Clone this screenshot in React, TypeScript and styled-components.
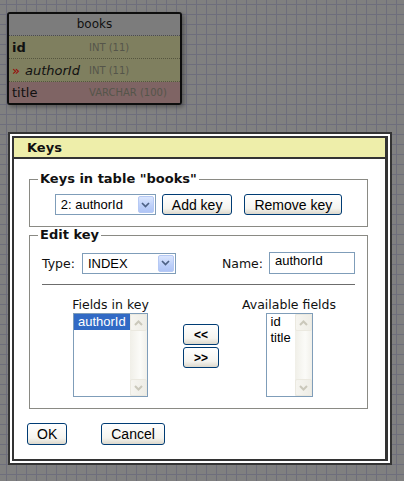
import React from 'react';
import styled, { createGlobalStyle } from 'styled-components';

const GlobalStyle = createGlobalStyle`
  html, body {
    margin: 0;
    padding: 0;
  }
  body {
    font-family: 'DejaVu Sans', Verdana, sans-serif;
  }
`;

const Canvas = styled.div`
  box-sizing: border-box;
  width: 404px;
  height: 481px;
  overflow: hidden;
  padding: 12px 0 0 7px;
  background-color: #808080;
  background-image: linear-gradient(to right, #6e6e7c 1px, transparent 1px),
    linear-gradient(to bottom, #6e6e7c 1px, transparent 1px);
  background-size: 10px 10px;
  background-position: 6px 4px;
`;

/* table node on the designer canvas */
const TableNode = styled.div`
  box-sizing: border-box;
  width: 175px;
  border: 2px solid #0d0d0d;
  border-radius: 3px;
  overflow: hidden;
  box-shadow: 2px 2px 4px rgba(0, 0, 0, 0.35);
`;

const TableTitle = styled.div`
  height: 21px;
  line-height: 21px;
  text-align: center;
  font-size: 12px;
  color: #111;
  background: #7c7c7c;
  border-bottom: 1px dotted #4c4c4c;
`;

const FieldRow = styled.div<{ $tone: 'key' | 'plain' }>`
  display: flex;
  align-items: center;
  height: 22px;
  padding-left: 3px;
  background: ${(p) => (p.$tone === 'key' ? '#7f7f5f' : '#7f6464')};
  &:not(:last-child) {
    border-bottom: 1px dotted #55553f;
  }
  &:last-child {
    height: 21px;
  }
`;

const FieldName = styled.div<{ $bold?: boolean; $italic?: boolean }>`
  width: 77px;
  font-size: 13px;
  color: #111;
  white-space: nowrap;
  font-weight: ${(p) => (p.$bold ? 'bold' : 'normal')};
  font-style: ${(p) => (p.$italic ? 'italic' : 'normal')};
`;

const FkMark = styled.span`
  color: #9a0000;
  font-style: normal;
  margin-right: 5px;
`;

const FieldType = styled.div`
  font-size: 10px;
  color: #55554a;
  white-space: nowrap;
`;

/* dialog */
const Dialog = styled.div`
  box-sizing: border-box;
  width: 384px;
  margin: 27px 0 0 1px;
  border: 2px solid #333;
  padding: 2px;
  background: #fff;
`;

const DialogInner = styled.div`
  border: 2px solid #333;
  border-right-width: 3px;
`;

const DialogTitle = styled.div`
  height: 19px;
  line-height: 19px;
  padding-left: 13px;
  background: #eeeeaa;
  border-bottom: 2px solid #333;
  font-size: 13px;
  font-weight: bold;
  color: #111;
`;

const DialogBody = styled.div`
  padding: 12px 17px 14px 15px;
`;

const Group = styled.fieldset<{ $top?: number }>`
  margin: 0;
  min-width: 0;
  border: 1px solid #8a8a84;
  padding: ${(p) => p.$top ?? 7}px 12px 11px;
`;

const GroupTitle = styled.legend`
  padding: 0 2px;
  margin-left: -4px;
  font-size: 13px;
  line-height: 16px;
  font-weight: bold;
  color: #111;
`;

const KeysRow = styled.div`
  display: flex;
  justify-content: center;
  align-items: center;
  gap: 6px;
`;

const FakeSelect = styled.div<{ $w: number }>`
  box-sizing: border-box;
  width: ${(p) => p.$w}px;
  height: 21px;
  display: flex;
  align-items: center;
  padding-left: 5px;
  border: 1px solid #7f9db9;
  background: #fff;
  font: 13px 'Liberation Sans', Arial, sans-serif;
  color: #000;
`;

const SelectText = styled.span`
  flex: 1;
  white-space: nowrap;
`;

const DropButton = styled.span`
  box-sizing: border-box;
  width: 16px;
  height: 17px;
  margin-right: 1px;
  display: flex;
  align-items: center;
  justify-content: center;
  border: 1px solid #b6c9f4;
  border-radius: 2px;
  background: linear-gradient(#dbe6fe, #bccff9 60%, #b0c5f6);
`;

const Btn = styled.button<{ $h?: number; $w?: number }>`
  box-sizing: border-box;
  height: ${(p) => p.$h ?? 21}px;
  ${(p) => (p.$w ? `width: ${p.$w}px;` : '')}
  padding: 0 9px;
  border: 1px solid #003c74;
  border-radius: 3px;
  background: linear-gradient(#ffffff, #f5f4ef 70%, #dcd8cc);
  font: 14px 'Liberation Sans', Arial, sans-serif;
  color: #000;
  white-space: nowrap;
`;

const Gap = styled.span<{ $w: number }>`
  width: ${(p) => p.$w}px;
`;

const TypeRow = styled.div`
  display: flex;
  align-items: center;
  height: 22px;
`;

const Label = styled.span`
  font-size: 12.5px;
  color: #111;
  white-space: nowrap;
`;

const Spacer = styled.span`
  flex: 1;
`;

const TextInput = styled.div`
  box-sizing: border-box;
  width: 86px;
  height: 22px;
  margin-left: 6px;
  padding-left: 5px;
  line-height: 20px;
  border: 1px solid #7f9db9;
  font: 13px 'Liberation Sans', Arial, sans-serif;
  color: #000;
`;

const Rule = styled.div`
  height: 1px;
  margin-top: 10px;
  background: #6c6c6c;
`;

const Columns = styled.div`
  display: grid;
  grid-template-columns: 137px 44px 1fr;
  margin-top: 12px;
`;

const Column = styled.div`
  display: flex;
  flex-direction: column;
  align-items: center;
`;

const ColumnLabel = styled(Label)`
  line-height: 15px;
  margin-bottom: 1px;
`;

const MoveColumn = styled.div`
  display: flex;
  flex-direction: column;
  align-items: center;
  gap: 2px;
  padding-top: 27px;
`;

const MoveBtn = styled(Btn)`
  width: 36px;
  padding: 0;
  font: bold 12px 'Liberation Sans', Arial, sans-serif;
`;

const ListBox = styled.div<{ $w: number }>`
  box-sizing: border-box;
  width: ${(p) => p.$w}px;
  height: 84px;
  display: flex;
  border: 1px solid #7f9db9;
  background: #fff;
`;

const ListItems = styled.div`
  flex: 1;
  min-width: 0;
`;

const ListItem = styled.div<{ $selected?: boolean }>`
  height: 16px;
  line-height: 16px;
  padding-left: 4px;
  font: 13px 'Liberation Sans', Arial, sans-serif;
  white-space: nowrap;
  color: ${(p) => (p.$selected ? '#fff' : '#000')};
  background: ${(p) => (p.$selected ? '#316ac5' : 'transparent')};
`;

const ScrollBar = styled.div`
  width: 17px;
  display: flex;
  flex-direction: column;
  background: linear-gradient(to right, #f0efe8, #fbfbf8 60%, #f1f0ea);
`;

const ScrollArrow = styled.div`
  box-sizing: border-box;
  width: 17px;
  height: 17px;
  display: flex;
  align-items: center;
  justify-content: center;
  border: 1px solid #ebe9e0;
  border-radius: 2px;
  background: linear-gradient(to right, #f6f5f0, #eeede6);
`;

const ScrollTrack = styled.div`
  flex: 1;
`;

const FooterRow = styled.div`
  display: flex;
  gap: 34px;
  margin: 14px 0 0 -2px;
`;

const Chevron = ({ up, color, w = 1.7 }: { up?: boolean; color: string; w?: number }) => (
  <svg width="9" height="6" viewBox="0 0 9 6">
    <path
      d={up ? 'M1 5 L4.5 1.5 L8 5' : 'M1 1 L4.5 4.5 L8 1'}
      fill="none"
      stroke={color}
      strokeWidth={w}
    />
  </svg>
);

const Select = ({ value, width }: { value: string; width: number }) => (
  <FakeSelect $w={width}>
    <SelectText>{value}</SelectText>
    <DropButton>
      <Chevron color="#4d6185" />
    </DropButton>
  </FakeSelect>
);

const List = ({ items, width, selected }: { items: string[]; width: number; selected?: number }) => (
  <ListBox $w={width}>
    <ListItems>
      {items.map((it, i) => (
        <ListItem key={it} $selected={i === selected}>
          {it}
        </ListItem>
      ))}
    </ListItems>
    <ScrollBar>
      <ScrollArrow>
        <Chevron up color="#cac8bb" w={2} />
      </ScrollArrow>
      <ScrollTrack />
      <ScrollArrow>
        <Chevron color="#cac8bb" w={2} />
      </ScrollArrow>
    </ScrollBar>
  </ListBox>
);

const App = () => {
  return (
    <Canvas>
      <GlobalStyle />
      <TableNode>
        <TableTitle>books</TableTitle>
        <FieldRow $tone="key">
          <FieldName $bold>id</FieldName>
          <FieldType>INT (11)</FieldType>
        </FieldRow>
        <FieldRow $tone="key">
          <FieldName $italic>
            <FkMark>»</FkMark>authorId
          </FieldName>
          <FieldType>INT (11)</FieldType>
        </FieldRow>
        <FieldRow $tone="plain">
          <FieldName>title</FieldName>
          <FieldType>VARCHAR (100)</FieldType>
        </FieldRow>
      </TableNode>

      <Dialog>
        <DialogInner>
          <DialogTitle>Keys</DialogTitle>
          <DialogBody>
            <Group>
              <GroupTitle>Keys in table "books"</GroupTitle>
              <KeysRow>
                <Select value="2: authorId" width={101} />
                <Btn>Add key</Btn>
                <Gap $w={0} />
                <Btn>Remove key</Btn>
              </KeysRow>
            </Group>

            <Group $top={9}>
              <GroupTitle>Edit key</GroupTitle>
              <TypeRow>
                <Label>Type:</Label>
                <Gap $w={7} />
                <Select value="INDEX" width={94} />
                <Spacer />
                <Label>Name:</Label>
                <TextInput>authorId</TextInput>
              </TypeRow>
              <Rule />
              <Columns>
                <Column>
                  <ColumnLabel>Fields in key</ColumnLabel>
                  <List items={['authorId']} width={75} selected={0} />
                </Column>
                <MoveColumn>
                  <MoveBtn>&lt;&lt;</MoveBtn>
                  <MoveBtn>&gt;&gt;</MoveBtn>
                </MoveColumn>
                <Column>
                  <ColumnLabel>Available fields</ColumnLabel>
                  <List items={['id', 'title']} width={47} />
                </Column>
              </Columns>
            </Group>

            <FooterRow>
              <Btn $h={22}>OK</Btn>
              <Btn $h={22}>Cancel</Btn>
            </FooterRow>
          </DialogBody>
        </DialogInner>
      </Dialog>
    </Canvas>
  );
};

export default App;
